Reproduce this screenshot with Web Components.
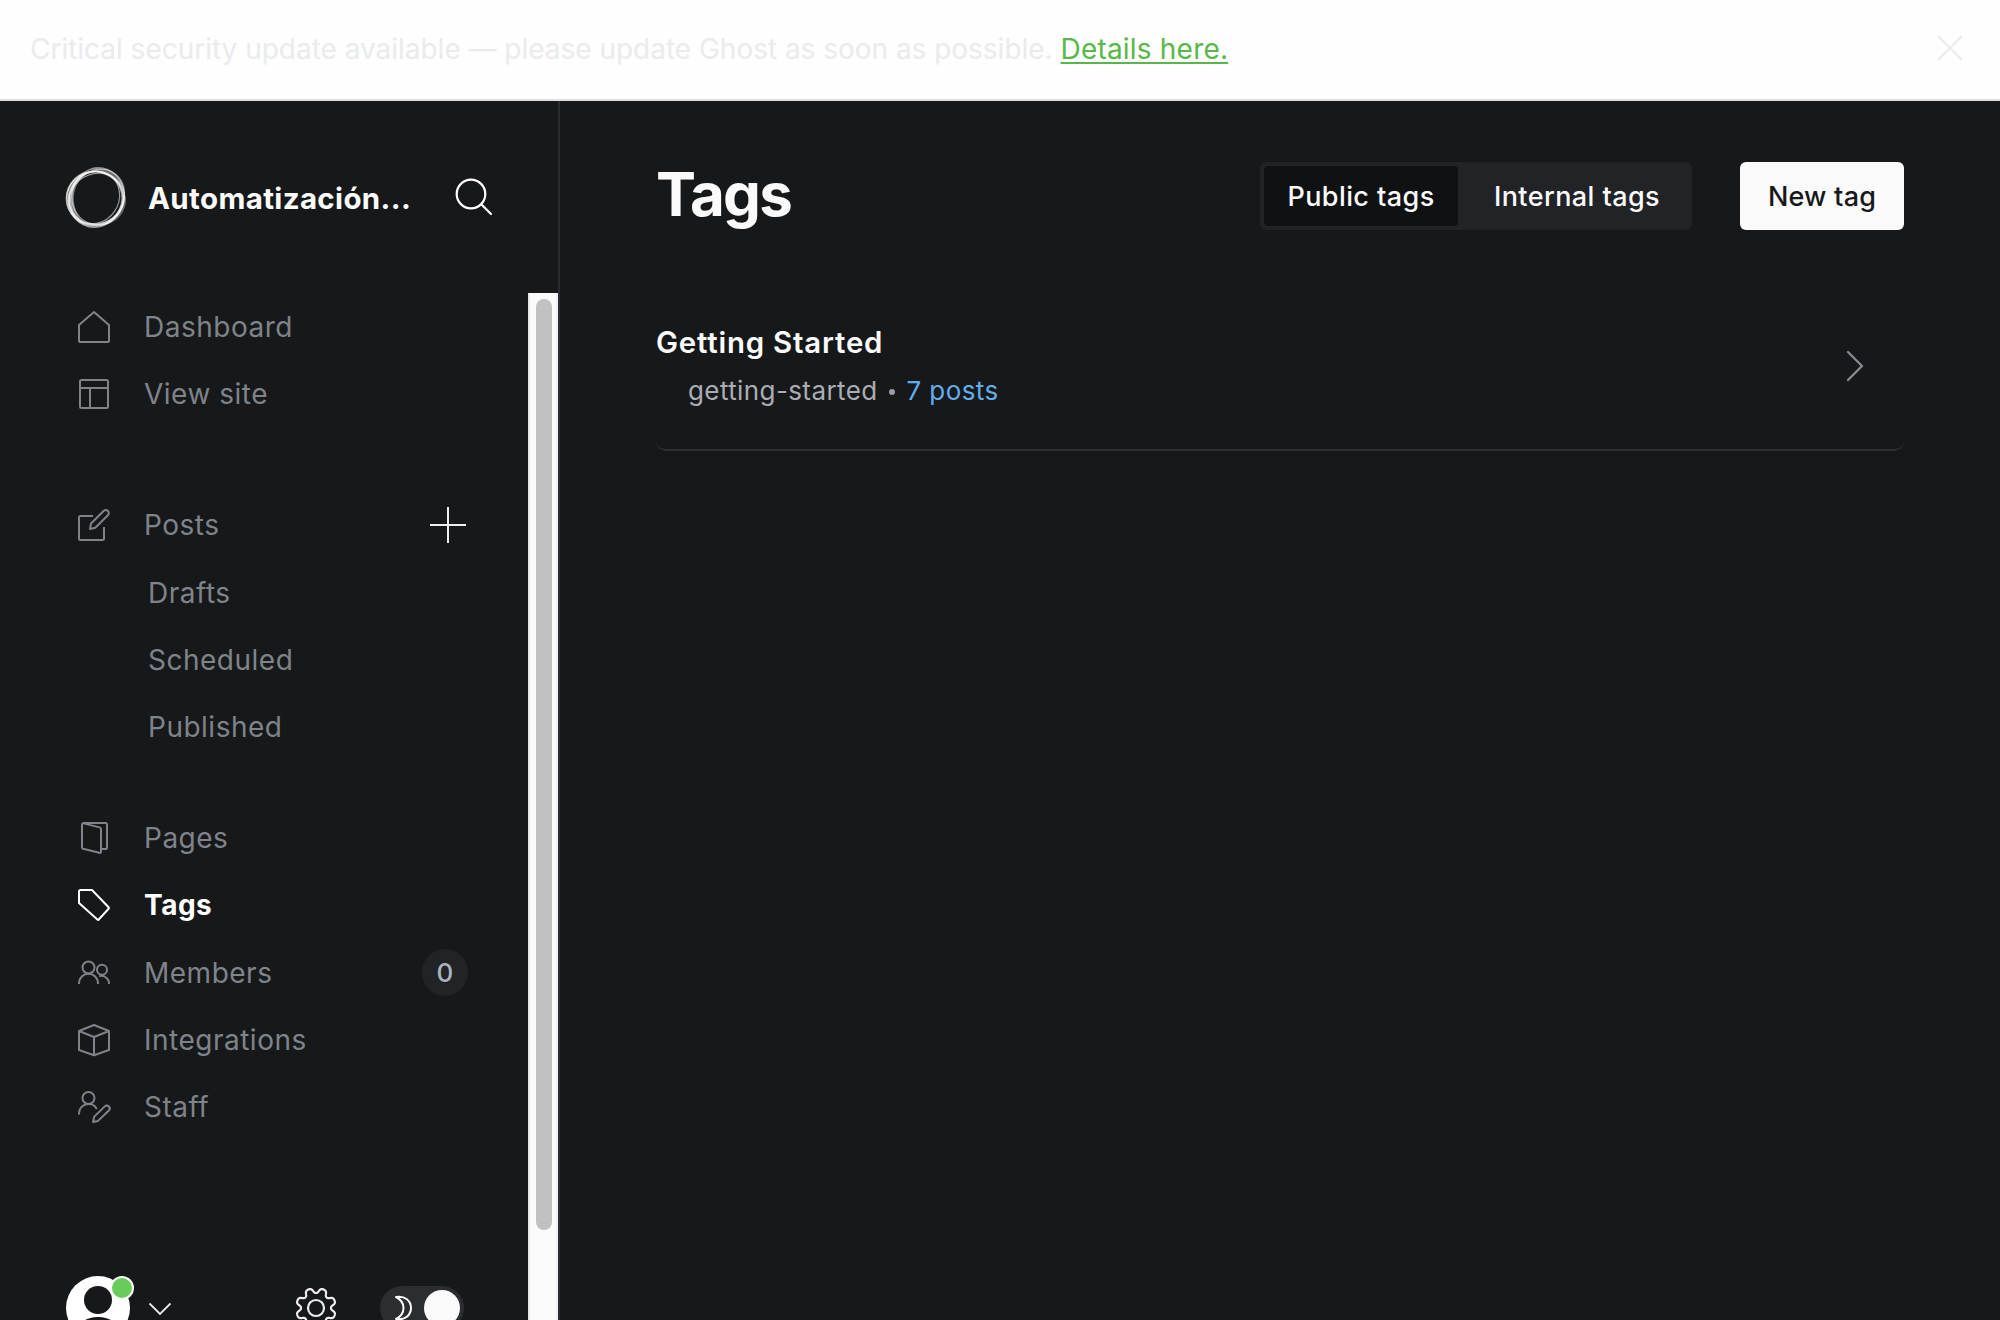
<!DOCTYPE html>
<html lang="es"><head><meta charset="utf-8"><title>Ghost</title>
<style>
html,body{margin:0;height:1320px;overflow:hidden;background:#fff}
body{font-family:Inter,"Liberation Sans",sans-serif;-webkit-font-smoothing:antialiased}
</style></head><body>
<ghost-app></ghost-app>
<script>
const def=(name,html,fn)=>customElements.define(name,class extends HTMLElement{
  connectedCallback(){if(this.shadowRoot)return;const t=document.createElement('template');t.innerHTML=html;
    this.attachShadow({mode:'open'}).append(t.content.cloneNode(true));if(fn)fn.call(this,this.shadowRoot)}
});
const ICONS={
home:'<path d="M1 14 16 1l15 13v16a1 1 0 0 1-1 1H2a1 1 0 0 1-1-1Z"/>',
layout:'<rect x="2" y="2" width="28" height="28" rx="1.5"/><path d="M2 10H30M12 10V30"/>',
edit:'<path d="M15 7H2.500Q1 7 1 8.500V29.500Q1 31 2.500 31H24.500Q26 31 26 29.500V18M12 20l1-5.500L25.600 2a3 3 0 0 1 4.300 4.300L17.300 18.800Z"/>',
pages:'<path d="M4 2.500Q4 1 5.500 1.400L21.500 5.400Q23 5.900 23 7.300V29.400Q23 31.300 21.300 30.800L5 26.800Q4 26.500 4 25.500ZM5 1H27.500Q29 1 29 2.500V25.500Q29 27 27.500 27H23"/>',
tag:'<path d="M1 2.500Q1 1 2.500 1H14L30.600 18.300Q31.300 19 30.600 19.800L20.500 30.700Q20 31.200 19.400 30.600L1 14Z"/>',
members:'<circle cx="10.500" cy="10.500" r="6"/><circle cx="24" cy="12.800" r="5"/><path d="M1 27v-1a9.500 9.200 0 0 1 19 0v1M21.300 19.200a7.600 7.600 0 0 1 9.700 7.300v.5"/>',
box:'<path d="M16 1 31 7V26L16 31.200 1 26V7ZM1 7l15 6L31 7M16 13V31"/>',
staff:'<circle cx="10.500" cy="7" r="6"/><path d="M1 23.500v-1a9.500 9.500 0 0 1 17.800-4.600M15 31l1.200-5.400L26.800 15.400a2.900 2.900 0 0 1 4.100 4.100L20 29.900Z"/>'};
def('ui-icon',`<style>:host{display:block;width:32px;height:32px;flex:none}svg{display:block;width:100%;height:100%;overflow:visible;fill:none;stroke:currentColor;stroke-width:2;stroke-linejoin:round}</style><svg viewBox="0 0 32 32"></svg>`,
function(r){r.querySelector('svg').innerHTML=ICONS[this.getAttribute('name')]});
def('update-banner',`<style>:host{display:flex;box-sizing:border-box;height:101px;border-bottom:2px solid #dddfe0;background:#fefefe;align-items:center;justify-content:space-between;padding:0 37px 1px 30px;font-size:28px;letter-spacing:-.02px;line-height:40px;color:#e9ebed}
a{color:#57b848;letter-spacing:.2px;text-decoration:underline;text-decoration-thickness:2px;text-underline-offset:3px}svg{display:block;margin-top:-3px}</style>
<div><slot></slot> <a>Details here.</a></div><svg width="26" height="26" fill="none" stroke="#ebebed" stroke-width="2"><path d="M1 1 25 25M25 1 1 25"/></svg>`);
def('nav-item',`<style>:host{display:flex;height:67.2px;box-sizing:border-box;align-items:center;padding:0 60px 0 78px;font-size:28px;letter-spacing:.5px;font-variant-ligatures:none;color:#7f838a}
:host([sub]){padding-left:148px}:host([active]){color:#fff;font-weight:700}
ui-icon{margin-right:34px}:host([sub]) ui-icon{display:none}span{flex:1;white-space:nowrap}</style>
<ui-icon></ui-icon><span><slot></slot></span><slot name="end"></slot>`,function(r){const i=r.querySelector('ui-icon'),n=this.getAttribute('icon');if(n)i.shadowRoot?i.shadowRoot.querySelector('svg').innerHTML=ICONS[n]:i.setAttribute('name',n)});
def('site-header',`<style>:host{display:flex;height:192px;box-sizing:border-box;align-items:flex-start;padding:65px 64px 0 65px}
.logo{flex:none}b{flex:none;margin:14px 0 0 21px;font-size:29.5px;letter-spacing:.35px;line-height:36px;font-weight:700;color:#fbfbfb;width:302px;white-space:nowrap}
.s{flex:none;margin:12px 0 0 5px}</style>
<svg class="logo" width="62" height="62" fill="none"><g stroke="#fff">
<ellipse cx="30" cy="32.500" rx="28.500" ry="27" stroke-width="1.600" opacity=".75"/>
<ellipse cx="30.500" cy="33" rx="26.500" ry="28" transform="rotate(25 30 33)" stroke-width="1.800" opacity=".6"/>
<ellipse cx="33" cy="30" rx="26" ry="28.500" transform="rotate(10 32 30)" stroke-width="1.400" opacity=".5"/>
<ellipse cx="32.500" cy="31" rx="29" ry="25.500" transform="rotate(-50 32.500 31)" stroke-width="1.300" opacity=".5"/>
<ellipse cx="29.500" cy="32" rx="27" ry="24.500" transform="rotate(-55 29 32)" stroke-width="1.200" opacity=".55"/>
<ellipse cx="32" cy="33" rx="28" ry="25" transform="rotate(-20 31 33)" stroke-width="1.200" opacity=".55"/></g>
<path d="M25 4C37-2 56 6 59 25C51 12 40 8 25 4ZM59 26C58 44 46 56 34 60C52 59 62 45 61 32Z" fill="#fff" fill-opacity=".36"/>
<path d="M27 5C10 5 0 20 2 36C4 46 10 54 20 59C5 44 3 16 27 5Z" fill="#fff" fill-opacity=".42"/></svg>
<b><slot></slot></b>
<svg class="s" width="38" height="38" fill="none" stroke="#fff" stroke-width="2.200" stroke-linecap="round"><circle cx="16" cy="16" r="14.300"/><path d="M26.500 26.500 36 36"/></svg>`);
def('user-bar',`<style>:host{display:flex;height:44px;overflow:hidden;padding-left:66px;box-sizing:border-box}svg{display:block}</style>
<svg width="410" height="44" viewBox="66 1276 410 44" fill="none">
<circle cx="98" cy="1308" r="32" fill="#fff"/><circle cx="98" cy="1300" r="14" fill="#17181b"/><ellipse cx="98" cy="1333" rx="22" ry="16" fill="#17181b"/>
<circle cx="122" cy="1288" r="11" fill="#67cc5a" stroke="#fff" stroke-width="2"/>
<path d="M149.500 1303.500 160 1314 170.500 1303.500" stroke="#e8e8ea" stroke-width="1.800"/>
<path id="gear" stroke="#ececee" stroke-width="2.200" stroke-linejoin="round"/><circle cx="316" cy="1308" r="8" stroke="#ececee" stroke-width="2.200"/>
<rect x="380" y="1286" width="84" height="44" rx="22" fill="#2c2d31"/><circle cx="442" cy="1308" r="18" fill="#fafafa"/>
<path d="M396 1297C405 1295.500 411 1301 411 1308S405 1320.500 396 1319C406 1314 406 1302 396 1297Z" stroke="#fafafa" stroke-width="2" stroke-linejoin="round"/></svg>`,
function(r){let d='';for(let i=0;i<=240;i++){const a=i/240*2*Math.PI,c=-Math.cos(8*a),k=17.500+2.500*Math.tanh(1.500*c)/Math.tanh(1.500),b=a-Math.sin(8*a)*.02;d+=(i?'L':'M')+(316+k*Math.cos(b)).toFixed(2)+' '+(1308+k*Math.sin(b)).toFixed(2)}r.querySelector('#gear').setAttribute('d',d+'Z')});
def('scroll-bar',`<style>:host{display:block;width:30px;box-sizing:border-box;border-left:2px solid #e8e8e8;border-right:2px solid #f2f2f3;background:#fafafa;padding:6px 4px 0 6px}i{display:block;width:16px;height:931px;border-radius:8px;background:#c1c1c1}</style><i></i>`);
def('side-bar',`<style>:host{display:flex;flex-direction:column;width:560px;box-sizing:border-box;border-right:2px solid #2a2b30;flex:none}
.body{display:flex;flex:1}nav{flex:1;display:flex;flex-direction:column}.gap{height:64.4px}.g2{height:43.800px}.low nav-item{height:67.3px}.plus{margin-right:2px}
.badge{display:flex;width:46px;height:47px;border-radius:50%;background:#222327;color:#abb4be;font-size:26px;font-weight:500;letter-spacing:0;align-items:center;justify-content:center}user-bar{margin-top:auto}</style>
<site-header>Automatización...</site-header><div class="body"><nav>
<nav-item icon="home">Dashboard</nav-item><nav-item icon="layout">View site</nav-item><div class="gap"></div>
<nav-item icon="edit">Posts<svg class="plus" slot="end" width="36" height="36" stroke="#f0f0f4" stroke-width="2"><path d="M0 18H36M18 0V36"/></svg></nav-item>
<nav-item sub>Drafts</nav-item><nav-item sub>Scheduled</nav-item><nav-item sub>Published</nav-item><div class="g2"></div>
<div class="low"><nav-item icon="pages">Pages</nav-item><nav-item icon="tag" active>Tags</nav-item><nav-item icon="members">Members<div class="badge" slot="end">0</div></nav-item><nav-item icon="box">Integrations</nav-item><nav-item icon="staff">Staff</nav-item></div>
<user-bar></user-bar></nav><scroll-bar></scroll-bar></div>`);
def('tag-row',`<style>:host{display:flex;justify-content:space-between;box-sizing:border-box;height:143px;border-bottom:2px solid #2e2f32;border-radius:10px;padding:16px 40px 0 0}
h3{margin:0;font-size:29.4px;letter-spacing:.8px;line-height:38px;font-weight:600;color:#fbfbfb}p{margin:11px 0 0 32px;font-size:26px;line-height:36px;color:#abadb5;letter-spacing:.4px;display:flex;align-items:center}
i{width:6px;height:6px;border-radius:50%;background:#9c9ea5;margin:2px 12px 0 11px}a{color:#62aeea}svg{display:block;margin-top:26px}</style>
<div><h3><slot></slot></h3><p><slot name="slug"></slot><i></i><a><slot name="count"></slot></a></p></div>
<svg width="18" height="32" fill="none" stroke="#888b93" stroke-width="2.300" stroke-linecap="round" stroke-linejoin="round"><path d="M2 2 16 16 2 30"/></svg>`);
def('tags-screen',`<style>:host{display:block;flex:1;padding:61px 96px 0}header{display:flex;align-items:center;height:68px}
h1{margin:0 auto 0 0;font-size:60px;letter-spacing:-1.7px;line-height:68px;font-weight:700;color:#fafafa;padding-bottom:4px}
.seg{display:flex;box-sizing:border-box;width:432px;height:68px;background:#222327;border-radius:6px;padding:4px;font-size:27px;letter-spacing:.42px;font-weight:500;color:#fbfbfb}
.seg span{display:flex;width:194px;align-items:center;justify-content:center;border-radius:4px}.seg span+span{flex:1;padding-left:8px}.on{background:#101113}
.new{display:flex;align-items:center;justify-content:center;width:164px;height:68px;margin-left:48px;background:#fafafa;border-radius:6px;color:#17181b;font-size:27px;letter-spacing:.2px;font-weight:500}
tag-row{margin-top:78px}</style>
<header><h1>Tags</h1><div class="seg"><span class="on">Public tags</span><span>Internal tags</span></div><div class="new">New tag</div></header>
<tag-row>Getting Started<span slot="slug">getting-started</span><span slot="count">7 posts</span></tag-row>`);
def('ghost-app',`<style>:host{display:flex;flex-direction:column;width:2000px;height:1320px}main{display:flex;height:1219px;background:#17181a}</style>
<update-banner>Critical security update available — please update Ghost as soon as possible.</update-banner><main><side-bar></side-bar><tags-screen></tags-screen></main>`);
</script></body></html>
